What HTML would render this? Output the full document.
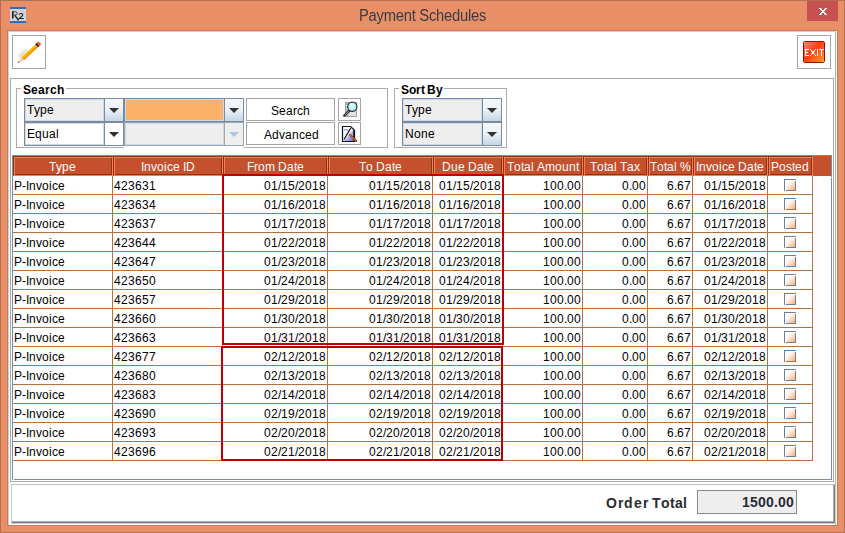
<!DOCTYPE html>
<html><head><meta charset="utf-8"><style>
*{margin:0;padding:0;box-sizing:border-box}
html,body{width:845px;height:533px;overflow:hidden}
body{position:relative;background:#E88F67;font-family:"Liberation Sans",sans-serif;font-size:12px;color:#000}
div,span,i,svg{position:absolute}
i{font-style:normal;top:0}
.tx{line-height:14px;white-space:nowrap;height:14px}
.hc{top:156px;height:20px;background:#C5502E;border-style:solid;border-width:1px;border-color:#8A3519 #FF7C4C #FF7C4C #8A3519;box-shadow:inset 1px 1px 0 #FF7C4C,inset -1px -1px 0 #8A3519}
.gv{width:1px;background:#B8703C}
.gh{height:1px;background:#B8703C}
.red{background:#C00000}
.cb{width:12px;height:12px;border:1px solid #7A8A99;background:linear-gradient(135deg,#fff 15%,#F9D2B8 55%,#F29A60 100%)}
.btn{border:1px solid #A5A5A5;background:#fff}
.combo{border:1px solid #7B8B9B;height:24px}
.combo .f{left:0;top:0;bottom:0;border:1px solid #CBD9E8}
.arr{border-left:1px solid #7B8B9B;top:0;bottom:0;width:19px}
.tri{width:0;height:0;border-left:5px solid transparent;border-right:5px solid transparent;border-top:5px solid #333}
</style></head><body>
<svg width="0" height="0" style="left:0;top:0"><defs><linearGradient id="cbg" x1="0" y1="0" x2="1" y2="1"><stop offset="0" stop-color="#fff"/><stop offset="0.35" stop-color="#FFF6F0"/><stop offset="1" stop-color="#FFAC6E"/></linearGradient></defs></svg>
<div style="left:0;top:0;width:845px;height:533px;border:1px solid #B7704F"></div>
<svg style="left:10px;top:7px" width="16" height="16" viewBox="0 0 16 16">
<rect width="16" height="16" fill="#D2D3D9"/>
<rect width="16" height="2" fill="#2B6FC4"/><rect y="14" width="16" height="2" fill="#2B6FC4"/>
<path d="M2.8 4.3v7.3" stroke="#151515" stroke-width="1.5"/>
<path d="M2.5 4.8h2.8c1.2 0 1.9 0.7 1.9 1.6c0 1-0.7 1.6-1.8 1.6h-1.8" fill="none" stroke="#2A2A2A" stroke-width="0.9"/>
<path d="M4.8 8.3l3.8 5" stroke="#151515" stroke-width="1.3"/>
<path d="M9.2 7.6c0.3-1.4 3.4-1.6 3.6 0c0.1 1.1-1.8 2.4-3.4 3.9h4.4" fill="none" stroke="#1E1E1E" stroke-width="1.15"/>
</svg>
<div style="left:0;top:7px;width:845px;text-align:center;font-size:16px;line-height:18px;color:#383D44;letter-spacing:-0.25px;transform:scaleX(0.92);transform-origin:423px 0">Payment Schedules</div>
<div style="left:807px;top:1px;width:31px;height:20px;background:#C75050"></div>
<svg style="left:819px;top:8px" width="8" height="7" fill="#fff" shape-rendering="crispEdges"><rect x="0" y="0" width="2" height="1"/><rect x="2" y="0" width="1" height="1" fill-opacity="0.45"/><rect x="5" y="0" width="1" height="1" fill-opacity="0.45"/><rect x="6" y="0" width="2" height="1"/><rect x="1" y="1" width="2" height="1"/><rect x="5" y="1" width="2" height="1"/><rect x="2" y="2" width="4" height="1"/><rect x="3" y="3" width="2" height="1"/><rect x="2" y="4" width="4" height="1"/><rect x="1" y="5" width="2" height="1"/><rect x="5" y="5" width="2" height="1"/><rect x="0" y="6" width="2" height="1"/><rect x="2" y="6" width="1" height="1" fill-opacity="0.45"/><rect x="5" y="6" width="1" height="1" fill-opacity="0.45"/><rect x="6" y="6" width="2" height="1"/></svg>
<div style="left:7px;top:30px;width:831px;height:496px;border:1px solid #C97A58;background:#fff"></div>
<div style="left:8px;top:31px;width:828px;height:494px;border-top:1px solid #C8D3DC;border-left:1px solid #C8D3DC;border-right:1px solid #B5B5B5"></div>
<div class="btn" style="left:12px;top:35px;width:34px;height:34px"></div>
<svg style="left:13px;top:36px" width="32" height="32" viewBox="0 0 32 32">
<defs><filter id="bl" x="-50%" y="-50%" width="200%" height="200%"><feGaussianBlur stdDeviation="1.1"/></filter>
<linearGradient id="pb" x1="0" y1="0" x2="0" y2="1"><stop offset="0" stop-color="#FFD24A"/><stop offset="0.45" stop-color="#FAAE00"/><stop offset="1" stop-color="#E48A00"/></linearGradient></defs>
<g transform="translate(4.8 27) rotate(-42.5)"><rect x="5" y="-5.2" width="11" height="3" fill="#000" opacity="0.14" filter="url(#bl)"/></g>
<g transform="translate(4.8 27) rotate(-42.5)">
<path d="M0 0L6.5 -2.1V2.1Z" fill="#F2D2B2"/>
<path d="M0 0L2 -0.65V0.65Z" fill="#222"/>
<rect x="6.5" y="-2.1" width="19" height="4.2" fill="url(#pb)"/>
<rect x="25.5" y="-2.1" width="2" height="4.2" fill="#222"/>
<rect x="27.3" y="-2.1" width="2.6" height="4.2" rx="0.8" fill="#FF5520"/>
</g></svg>
<div class="btn" style="left:797px;top:35px;width:34px;height:34px"></div>
<svg style="left:803px;top:41px" width="22" height="22" viewBox="0 0 22 22">
<defs><linearGradient id="eg" x1="0" y1="0" x2="1" y2="1"><stop offset="0" stop-color="#E99282"/><stop offset="0.45" stop-color="#FF3E0E"/><stop offset="1" stop-color="#FFA030"/></linearGradient></defs>
<path d="M1.5 0.5h19l1 1v19l-1 1h-19l-1-1v-19z" fill="url(#eg)" stroke="#9C0C0C" stroke-width="1"/>
<g fill="#fff" shape-rendering="crispEdges"><rect x="2" y="8" width="1" height="7"/><rect x="3" y="8" width="3" height="1"/><rect x="3" y="11" width="2" height="1"/><rect x="3" y="14" width="3" height="1"/><rect x="7" y="8" width="1" height="1"/><rect x="12" y="8" width="1" height="1"/><rect x="8" y="9" width="1" height="1"/><rect x="11" y="9" width="1" height="1"/><rect x="8" y="13" width="1" height="1"/><rect x="11" y="13" width="1" height="1"/><rect x="7" y="14" width="1" height="1"/><rect x="12" y="14" width="1" height="1"/><rect x="9" y="10" width="2" height="3"/><rect x="8" y="10" width="1" height="1" fill-opacity="0.5"/><rect x="11" y="10" width="1" height="1" fill-opacity="0.5"/><rect x="8" y="12" width="1" height="1" fill-opacity="0.5"/><rect x="11" y="12" width="1" height="1" fill-opacity="0.5"/><rect x="14" y="8" width="1" height="7"/><rect x="16" y="8" width="5" height="1"/><rect x="18" y="9" width="1" height="6"/></g>
</svg>
<div style="left:10px;top:78px;width:824px;height:404px;border:1px solid #ABABAB"></div>
<div style="left:16px;top:88px;width:372px;height:60px;border:1px solid #ABABAB"></div>
<div style="left:21px;top:82px;width:45px;height:12px;background:#fff"></div>
<div style="left:124px;top:146px;width:120px;height:3px;background:#fff"></div>
<div class="tx" style="left:23px;top:83px;font-weight:bold"><i style="left:0px">S</i><i style="left:8px">e</i><i style="left:15px">a</i><i style="left:22px">r</i><i style="left:27px">c</i><i style="left:34px">h</i></div>
<div style="left:394px;top:88px;width:113px;height:60px;border:1px solid #ABABAB"></div>
<div style="left:399px;top:82px;width:45px;height:12px;background:#fff"></div>
<div class="tx" style="left:401px;top:83px;font-weight:bold"><i style="left:0px">S</i><i style="left:8px">o</i><i style="left:15px">r</i><i style="left:20px">t</i></div>
<div class="tx" style="left:427px;top:83px;font-weight:bold"><i style="left:0px">B</i><i style="left:9px">y</i></div>
<div class="combo" style="left:24px;top:98px;width:100px;background:#EEEEEE;border-color:#7B8B9B"><div class="f" style="width:79px"></div><div class="tx" style="left:2px;top:4px"><i style="left:0px">T</i><i style="left:7px">y</i><i style="left:13px">p</i><i style="left:20px">e</i></div><div class="arr" style="right:0;background:linear-gradient(#F4F7FB,#EEF3F8 45%,#C5D6E7);border-left-color:#7B8B9B"><div class="tri" style="left:4px;top:9px;"></div></div></div>
<div class="combo" style="left:24px;top:122px;width:100px;background:#FFFFFF;border-color:#7B8B9B"><div class="f" style="width:79px"></div><div class="tx" style="left:2px;top:4px"><i style="left:0px">E</i><i style="left:8px">q</i><i style="left:15px">u</i><i style="left:22px">a</i><i style="left:29px">l</i></div><div class="arr" style="right:0;background:#FFFFFF;border-left-color:#7B8B9B"><div class="tri" style="left:4px;top:9px;"></div></div></div>
<div class="combo" style="left:124px;top:98px;width:120px;background:#FCB16B;border-color:#7B8B9B"><div class="f" style="width:99px"></div><div class="arr" style="right:0;background:linear-gradient(#F4F7FB,#EEF3F8 45%,#C5D6E7);border-left-color:#7B8B9B"><div class="tri" style="left:4px;top:9px;"></div></div></div>
<div class="combo" style="left:124px;top:122px;width:120px;background:#EEEEEE;border-color:#9AA6B2"><div class="f" style="width:99px"></div><div class="arr" style="right:0;background:#EEEEEE;border-left-color:#9AA6B2"><div class="tri" style="left:4px;top:9px;border-top-color:#A9C6E3"></div></div></div>
<div class="btn" style="left:246px;top:98px;width:89px;height:23px"></div>
<div class="tx" style="left:271px;top:104px"><i style="left:0px">S</i><i style="left:8px">e</i><i style="left:15px">a</i><i style="left:22px">r</i><i style="left:26px">c</i><i style="left:32px">h</i></div>
<div class="btn" style="left:246px;top:122px;width:89px;height:23px"></div>
<div class="tx" style="left:264px;top:128px"><i style="left:0px">A</i><i style="left:8px">d</i><i style="left:15px">v</i><i style="left:21px">a</i><i style="left:28px">n</i><i style="left:35px">c</i><i style="left:41px">e</i><i style="left:48px">d</i></div>
<div class="btn" style="left:338px;top:98px;width:23px;height:23px"></div>
<svg style="left:339px;top:99px" width="21" height="21" viewBox="0 0 21 21">
<defs><radialGradient id="lg" cx="0.45" cy="0.45" r="0.6"><stop offset="0" stop-color="#E6FFFF"/><stop offset="1" stop-color="#9FE6EE"/></radialGradient></defs>
<rect x="6.5" y="3.5" width="11" height="14" fill="#E2E2E2" stroke="#A0A0A0"/>
<rect x="7" y="4" width="2.5" height="13" fill="#B8B8B8"/>
<path d="M7 6.5h3M7 9.5h2.5" stroke="#fff" stroke-width="1"/>
<path d="M10.2 11.8L5.3 16.7" stroke="#3A3A3A" stroke-width="2.6" stroke-linecap="round"/>
<path d="M9.6 12.4L6 16" stroke="#9A9A9A" stroke-width="0.8"/>
<circle cx="13.3" cy="7.7" r="4.6" fill="url(#lg)" stroke="#333" stroke-width="1.2"/>
</svg>
<div class="btn" style="left:338px;top:122px;width:23px;height:23px"></div>
<svg style="left:339px;top:123px" width="21" height="21" viewBox="0 0 21 21">
<defs><linearGradient id="ag" x1="0" y1="0" x2="1" y2="1"><stop offset="0" stop-color="#FFFFFF"/><stop offset="0.5" stop-color="#F4F4FF"/><stop offset="0.6" stop-color="#B4B4F6"/><stop offset="1" stop-color="#5E5EEA"/></linearGradient></defs>
<path d="M3.5 3.5h8.2l3.8 3.8v11.2h-12z" fill="url(#ag)" stroke="#111" stroke-width="1.2"/>
<path d="M14.5 7.5v10" stroke="#333" stroke-width="1"/>
<path d="M5 7c2 -0.8 3.5 -0.3 4.5 0.8" stroke="#A0A0F2" stroke-width="1.4" fill="none"/>
<path d="M5 16.5L11.8 5" stroke="#111" stroke-width="1.2"/>
<path d="M11 12L17.4 18" stroke="#8A3A10" stroke-width="2" stroke-linecap="round"/>
<path d="M11 12L17.4 18" stroke="#F0904A" stroke-width="0.8"/>
</svg>
<div class="combo" style="left:402px;top:98px;width:100px;background:#EEEEEE;border-color:#7B8B9B"><div class="f" style="width:79px"></div><div class="tx" style="left:2px;top:4px"><i style="left:0px">T</i><i style="left:7px">y</i><i style="left:13px">p</i><i style="left:20px">e</i></div><div class="arr" style="right:0;background:linear-gradient(#F4F7FB,#EEF3F8 45%,#C5D6E7);border-left-color:#7B8B9B"><div class="tri" style="left:4px;top:9px;"></div></div></div>
<div class="combo" style="left:402px;top:122px;width:100px;background:#EEEEEE;border-color:#7B8B9B"><div class="f" style="width:79px"></div><div class="tx" style="left:2px;top:4px"><i style="left:0px">N</i><i style="left:9px">o</i><i style="left:16px">n</i><i style="left:23px">e</i></div><div class="arr" style="right:0;background:linear-gradient(#F4F7FB,#EEF3F8 45%,#C5D6E7);border-left-color:#7B8B9B"><div class="tri" style="left:4px;top:9px;"></div></div></div>
<div style="left:12px;top:155px;width:820px;height:325px;border:1px solid #7790A5;background:#fff"></div>
<div style="left:13px;top:156px;width:818px;height:20px;background:#C5502E"></div>
<div style="left:831px;top:177px;width:1px;height:1px;background:#fff"></div>
<div style="left:13px;top:479px;width:1px;height:1px;background:#fff"></div>
<div class="hc" style="left:13px;width:100px"></div>
<div class="tx" style="left:49px;top:160px;color:#fff"><i style="left:0px">T</i><i style="left:7px">y</i><i style="left:13px">p</i><i style="left:20px">e</i></div>
<div class="hc" style="left:113px;width:110px"></div>
<div class="tx" style="left:141px;top:160px;color:#fff"><i style="left:0px">I</i><i style="left:3px">n</i><i style="left:10px">v</i><i style="left:16px">o</i><i style="left:23px">i</i><i style="left:26px">c</i><i style="left:32px">e</i><i style="left:42px">I</i><i style="left:45px">D</i></div>
<div class="hc" style="left:223px;width:105px"></div>
<div class="tx" style="left:247px;top:160px;color:#fff"><i style="left:0px">F</i><i style="left:7px">r</i><i style="left:11px">o</i><i style="left:18px">m</i><i style="left:31px">D</i><i style="left:40px">a</i><i style="left:47px">t</i><i style="left:50px">e</i></div>
<div class="hc" style="left:328px;width:105px"></div>
<div class="tx" style="left:359px;top:160px;color:#fff"><i style="left:0px">T</i><i style="left:7px">o</i><i style="left:17px">D</i><i style="left:26px">a</i><i style="left:33px">t</i><i style="left:36px">e</i></div>
<div class="hc" style="left:433px;width:70px"></div>
<div class="tx" style="left:442px;top:160px;color:#fff"><i style="left:0px">D</i><i style="left:9px">u</i><i style="left:16px">e</i><i style="left:26px">D</i><i style="left:35px">a</i><i style="left:42px">t</i><i style="left:45px">e</i></div>
<div class="hc" style="left:503px;width:80px"></div>
<div class="tx" style="left:507px;top:160px;color:#fff"><i style="left:0px">T</i><i style="left:7px">o</i><i style="left:14px">t</i><i style="left:17px">a</i><i style="left:24px">l</i><i style="left:30px">A</i><i style="left:38px">m</i><i style="left:48px">o</i><i style="left:55px">u</i><i style="left:62px">n</i><i style="left:69px">t</i></div>
<div class="hc" style="left:583px;width:65px"></div>
<div class="tx" style="left:590px;top:160px;color:#fff"><i style="left:0px">T</i><i style="left:7px">o</i><i style="left:14px">t</i><i style="left:17px">a</i><i style="left:24px">l</i><i style="left:30px">T</i><i style="left:37px">a</i><i style="left:44px">x</i></div>
<div class="hc" style="left:648px;width:45px"></div>
<div class="tx" style="left:650px;top:160px;color:#fff"><i style="left:0px">T</i><i style="left:7px">o</i><i style="left:14px">t</i><i style="left:17px">a</i><i style="left:24px">l</i><i style="left:30px">%</i></div>
<div class="hc" style="left:693px;width:75px"></div>
<div class="tx" style="left:696px;top:160px;color:#fff"><i style="left:0px">I</i><i style="left:3px">n</i><i style="left:10px">v</i><i style="left:16px">o</i><i style="left:23px">i</i><i style="left:26px">c</i><i style="left:32px">e</i><i style="left:42px">D</i><i style="left:51px">a</i><i style="left:58px">t</i><i style="left:61px">e</i></div>
<div class="hc" style="left:768px;width:45px"></div>
<div class="tx" style="left:771px;top:160px;color:#fff"><i style="left:0px">P</i><i style="left:8px">o</i><i style="left:15px">s</i><i style="left:21px">t</i><i style="left:24px">e</i><i style="left:31px">d</i></div>
<div class="gv" style="left:112px;top:176px;height:285px"></div>
<div class="gv" style="left:222px;top:176px;height:285px"></div>
<div class="gv" style="left:327px;top:176px;height:285px"></div>
<div class="gv" style="left:432px;top:176px;height:285px"></div>
<div class="gv" style="left:502px;top:176px;height:285px"></div>
<div class="gv" style="left:582px;top:176px;height:285px"></div>
<div class="gv" style="left:647px;top:176px;height:285px"></div>
<div class="gv" style="left:692px;top:176px;height:285px"></div>
<div class="gv" style="left:767px;top:176px;height:285px"></div>
<div class="gv" style="left:812px;top:176px;height:285px"></div>
<div class="gh" style="left:13px;top:194px;width:800px"></div>
<div class="gh" style="left:13px;top:213px;width:800px"></div>
<div class="gh" style="left:13px;top:232px;width:800px"></div>
<div class="gh" style="left:13px;top:251px;width:800px"></div>
<div class="gh" style="left:13px;top:270px;width:800px"></div>
<div class="gh" style="left:13px;top:289px;width:800px"></div>
<div class="gh" style="left:13px;top:308px;width:800px"></div>
<div class="gh" style="left:13px;top:327px;width:800px"></div>
<div class="gh" style="left:13px;top:346px;width:800px"></div>
<div class="gh" style="left:13px;top:365px;width:800px"></div>
<div class="gh" style="left:13px;top:384px;width:800px"></div>
<div class="gh" style="left:13px;top:403px;width:800px"></div>
<div class="gh" style="left:13px;top:422px;width:800px"></div>
<div class="gh" style="left:13px;top:441px;width:800px"></div>
<div class="gh" style="left:13px;top:460px;width:800px"></div>
<div class="tx" style="left:14px;top:179px"><i style="left:0px">P</i><i style="left:8px">-</i><i style="left:12px">I</i><i style="left:15px">n</i><i style="left:22px">v</i><i style="left:28px">o</i><i style="left:35px">i</i><i style="left:38px">c</i><i style="left:44px">e</i></div>
<div class="tx" style="left:114px;top:179px"><i style="left:0px">4</i><i style="left:7px">2</i><i style="left:14px">3</i><i style="left:21px">6</i><i style="left:28px">3</i><i style="left:35px">1</i></div>
<div class="tx" style="left:264px;top:179px"><i style="left:0px">0</i><i style="left:7px">1</i><i style="left:14px">/</i><i style="left:17px">1</i><i style="left:24px">5</i><i style="left:31px">/</i><i style="left:34px">2</i><i style="left:41px">0</i><i style="left:48px">1</i><i style="left:55px">8</i></div>
<div class="tx" style="left:369px;top:179px"><i style="left:0px">0</i><i style="left:7px">1</i><i style="left:14px">/</i><i style="left:17px">1</i><i style="left:24px">5</i><i style="left:31px">/</i><i style="left:34px">2</i><i style="left:41px">0</i><i style="left:48px">1</i><i style="left:55px">8</i></div>
<div class="tx" style="left:439px;top:179px"><i style="left:0px">0</i><i style="left:7px">1</i><i style="left:14px">/</i><i style="left:17px">1</i><i style="left:24px">5</i><i style="left:31px">/</i><i style="left:34px">2</i><i style="left:41px">0</i><i style="left:48px">1</i><i style="left:55px">8</i></div>
<div class="tx" style="left:543px;top:179px"><i style="left:0px">1</i><i style="left:7px">0</i><i style="left:14px">0</i><i style="left:21px">.</i><i style="left:24px">0</i><i style="left:31px">0</i></div>
<div class="tx" style="left:622px;top:179px"><i style="left:0px">0</i><i style="left:7px">.</i><i style="left:10px">0</i><i style="left:17px">0</i></div>
<div class="tx" style="left:667px;top:179px"><i style="left:0px">6</i><i style="left:7px">.</i><i style="left:10px">6</i><i style="left:17px">7</i></div>
<div class="tx" style="left:704px;top:179px"><i style="left:0px">0</i><i style="left:7px">1</i><i style="left:14px">/</i><i style="left:17px">1</i><i style="left:24px">5</i><i style="left:31px">/</i><i style="left:34px">2</i><i style="left:41px">0</i><i style="left:48px">1</i><i style="left:55px">8</i></div>
<svg style="left:784px;top:179px" width="12" height="12" viewBox="0 0 12 12"><rect width="12" height="1" fill="#6E8092"/><rect width="1" height="12" fill="#6E8092"/><rect x="11" y="2" width="1" height="10" fill="#6E8092"/><rect x="2" y="11" width="10" height="1" fill="#6E8092"/><rect x="2" y="2" width="9" height="9" fill="url(#cbg)"/></svg>
<div class="tx" style="left:14px;top:198px"><i style="left:0px">P</i><i style="left:8px">-</i><i style="left:12px">I</i><i style="left:15px">n</i><i style="left:22px">v</i><i style="left:28px">o</i><i style="left:35px">i</i><i style="left:38px">c</i><i style="left:44px">e</i></div>
<div class="tx" style="left:114px;top:198px"><i style="left:0px">4</i><i style="left:7px">2</i><i style="left:14px">3</i><i style="left:21px">6</i><i style="left:28px">3</i><i style="left:35px">4</i></div>
<div class="tx" style="left:264px;top:198px"><i style="left:0px">0</i><i style="left:7px">1</i><i style="left:14px">/</i><i style="left:17px">1</i><i style="left:24px">6</i><i style="left:31px">/</i><i style="left:34px">2</i><i style="left:41px">0</i><i style="left:48px">1</i><i style="left:55px">8</i></div>
<div class="tx" style="left:369px;top:198px"><i style="left:0px">0</i><i style="left:7px">1</i><i style="left:14px">/</i><i style="left:17px">1</i><i style="left:24px">6</i><i style="left:31px">/</i><i style="left:34px">2</i><i style="left:41px">0</i><i style="left:48px">1</i><i style="left:55px">8</i></div>
<div class="tx" style="left:439px;top:198px"><i style="left:0px">0</i><i style="left:7px">1</i><i style="left:14px">/</i><i style="left:17px">1</i><i style="left:24px">6</i><i style="left:31px">/</i><i style="left:34px">2</i><i style="left:41px">0</i><i style="left:48px">1</i><i style="left:55px">8</i></div>
<div class="tx" style="left:543px;top:198px"><i style="left:0px">1</i><i style="left:7px">0</i><i style="left:14px">0</i><i style="left:21px">.</i><i style="left:24px">0</i><i style="left:31px">0</i></div>
<div class="tx" style="left:622px;top:198px"><i style="left:0px">0</i><i style="left:7px">.</i><i style="left:10px">0</i><i style="left:17px">0</i></div>
<div class="tx" style="left:667px;top:198px"><i style="left:0px">6</i><i style="left:7px">.</i><i style="left:10px">6</i><i style="left:17px">7</i></div>
<div class="tx" style="left:704px;top:198px"><i style="left:0px">0</i><i style="left:7px">1</i><i style="left:14px">/</i><i style="left:17px">1</i><i style="left:24px">6</i><i style="left:31px">/</i><i style="left:34px">2</i><i style="left:41px">0</i><i style="left:48px">1</i><i style="left:55px">8</i></div>
<svg style="left:784px;top:198px" width="12" height="12" viewBox="0 0 12 12"><rect width="12" height="1" fill="#6E8092"/><rect width="1" height="12" fill="#6E8092"/><rect x="11" y="2" width="1" height="10" fill="#6E8092"/><rect x="2" y="11" width="10" height="1" fill="#6E8092"/><rect x="2" y="2" width="9" height="9" fill="url(#cbg)"/></svg>
<div class="tx" style="left:14px;top:217px"><i style="left:0px">P</i><i style="left:8px">-</i><i style="left:12px">I</i><i style="left:15px">n</i><i style="left:22px">v</i><i style="left:28px">o</i><i style="left:35px">i</i><i style="left:38px">c</i><i style="left:44px">e</i></div>
<div class="tx" style="left:114px;top:217px"><i style="left:0px">4</i><i style="left:7px">2</i><i style="left:14px">3</i><i style="left:21px">6</i><i style="left:28px">3</i><i style="left:35px">7</i></div>
<div class="tx" style="left:264px;top:217px"><i style="left:0px">0</i><i style="left:7px">1</i><i style="left:14px">/</i><i style="left:17px">1</i><i style="left:24px">7</i><i style="left:31px">/</i><i style="left:34px">2</i><i style="left:41px">0</i><i style="left:48px">1</i><i style="left:55px">8</i></div>
<div class="tx" style="left:369px;top:217px"><i style="left:0px">0</i><i style="left:7px">1</i><i style="left:14px">/</i><i style="left:17px">1</i><i style="left:24px">7</i><i style="left:31px">/</i><i style="left:34px">2</i><i style="left:41px">0</i><i style="left:48px">1</i><i style="left:55px">8</i></div>
<div class="tx" style="left:439px;top:217px"><i style="left:0px">0</i><i style="left:7px">1</i><i style="left:14px">/</i><i style="left:17px">1</i><i style="left:24px">7</i><i style="left:31px">/</i><i style="left:34px">2</i><i style="left:41px">0</i><i style="left:48px">1</i><i style="left:55px">8</i></div>
<div class="tx" style="left:543px;top:217px"><i style="left:0px">1</i><i style="left:7px">0</i><i style="left:14px">0</i><i style="left:21px">.</i><i style="left:24px">0</i><i style="left:31px">0</i></div>
<div class="tx" style="left:622px;top:217px"><i style="left:0px">0</i><i style="left:7px">.</i><i style="left:10px">0</i><i style="left:17px">0</i></div>
<div class="tx" style="left:667px;top:217px"><i style="left:0px">6</i><i style="left:7px">.</i><i style="left:10px">6</i><i style="left:17px">7</i></div>
<div class="tx" style="left:704px;top:217px"><i style="left:0px">0</i><i style="left:7px">1</i><i style="left:14px">/</i><i style="left:17px">1</i><i style="left:24px">7</i><i style="left:31px">/</i><i style="left:34px">2</i><i style="left:41px">0</i><i style="left:48px">1</i><i style="left:55px">8</i></div>
<svg style="left:784px;top:217px" width="12" height="12" viewBox="0 0 12 12"><rect width="12" height="1" fill="#6E8092"/><rect width="1" height="12" fill="#6E8092"/><rect x="11" y="2" width="1" height="10" fill="#6E8092"/><rect x="2" y="11" width="10" height="1" fill="#6E8092"/><rect x="2" y="2" width="9" height="9" fill="url(#cbg)"/></svg>
<div class="tx" style="left:14px;top:236px"><i style="left:0px">P</i><i style="left:8px">-</i><i style="left:12px">I</i><i style="left:15px">n</i><i style="left:22px">v</i><i style="left:28px">o</i><i style="left:35px">i</i><i style="left:38px">c</i><i style="left:44px">e</i></div>
<div class="tx" style="left:114px;top:236px"><i style="left:0px">4</i><i style="left:7px">2</i><i style="left:14px">3</i><i style="left:21px">6</i><i style="left:28px">4</i><i style="left:35px">4</i></div>
<div class="tx" style="left:264px;top:236px"><i style="left:0px">0</i><i style="left:7px">1</i><i style="left:14px">/</i><i style="left:17px">2</i><i style="left:24px">2</i><i style="left:31px">/</i><i style="left:34px">2</i><i style="left:41px">0</i><i style="left:48px">1</i><i style="left:55px">8</i></div>
<div class="tx" style="left:369px;top:236px"><i style="left:0px">0</i><i style="left:7px">1</i><i style="left:14px">/</i><i style="left:17px">2</i><i style="left:24px">2</i><i style="left:31px">/</i><i style="left:34px">2</i><i style="left:41px">0</i><i style="left:48px">1</i><i style="left:55px">8</i></div>
<div class="tx" style="left:439px;top:236px"><i style="left:0px">0</i><i style="left:7px">1</i><i style="left:14px">/</i><i style="left:17px">2</i><i style="left:24px">2</i><i style="left:31px">/</i><i style="left:34px">2</i><i style="left:41px">0</i><i style="left:48px">1</i><i style="left:55px">8</i></div>
<div class="tx" style="left:543px;top:236px"><i style="left:0px">1</i><i style="left:7px">0</i><i style="left:14px">0</i><i style="left:21px">.</i><i style="left:24px">0</i><i style="left:31px">0</i></div>
<div class="tx" style="left:622px;top:236px"><i style="left:0px">0</i><i style="left:7px">.</i><i style="left:10px">0</i><i style="left:17px">0</i></div>
<div class="tx" style="left:667px;top:236px"><i style="left:0px">6</i><i style="left:7px">.</i><i style="left:10px">6</i><i style="left:17px">7</i></div>
<div class="tx" style="left:704px;top:236px"><i style="left:0px">0</i><i style="left:7px">1</i><i style="left:14px">/</i><i style="left:17px">2</i><i style="left:24px">2</i><i style="left:31px">/</i><i style="left:34px">2</i><i style="left:41px">0</i><i style="left:48px">1</i><i style="left:55px">8</i></div>
<svg style="left:784px;top:236px" width="12" height="12" viewBox="0 0 12 12"><rect width="12" height="1" fill="#6E8092"/><rect width="1" height="12" fill="#6E8092"/><rect x="11" y="2" width="1" height="10" fill="#6E8092"/><rect x="2" y="11" width="10" height="1" fill="#6E8092"/><rect x="2" y="2" width="9" height="9" fill="url(#cbg)"/></svg>
<div class="tx" style="left:14px;top:255px"><i style="left:0px">P</i><i style="left:8px">-</i><i style="left:12px">I</i><i style="left:15px">n</i><i style="left:22px">v</i><i style="left:28px">o</i><i style="left:35px">i</i><i style="left:38px">c</i><i style="left:44px">e</i></div>
<div class="tx" style="left:114px;top:255px"><i style="left:0px">4</i><i style="left:7px">2</i><i style="left:14px">3</i><i style="left:21px">6</i><i style="left:28px">4</i><i style="left:35px">7</i></div>
<div class="tx" style="left:264px;top:255px"><i style="left:0px">0</i><i style="left:7px">1</i><i style="left:14px">/</i><i style="left:17px">2</i><i style="left:24px">3</i><i style="left:31px">/</i><i style="left:34px">2</i><i style="left:41px">0</i><i style="left:48px">1</i><i style="left:55px">8</i></div>
<div class="tx" style="left:369px;top:255px"><i style="left:0px">0</i><i style="left:7px">1</i><i style="left:14px">/</i><i style="left:17px">2</i><i style="left:24px">3</i><i style="left:31px">/</i><i style="left:34px">2</i><i style="left:41px">0</i><i style="left:48px">1</i><i style="left:55px">8</i></div>
<div class="tx" style="left:439px;top:255px"><i style="left:0px">0</i><i style="left:7px">1</i><i style="left:14px">/</i><i style="left:17px">2</i><i style="left:24px">3</i><i style="left:31px">/</i><i style="left:34px">2</i><i style="left:41px">0</i><i style="left:48px">1</i><i style="left:55px">8</i></div>
<div class="tx" style="left:543px;top:255px"><i style="left:0px">1</i><i style="left:7px">0</i><i style="left:14px">0</i><i style="left:21px">.</i><i style="left:24px">0</i><i style="left:31px">0</i></div>
<div class="tx" style="left:622px;top:255px"><i style="left:0px">0</i><i style="left:7px">.</i><i style="left:10px">0</i><i style="left:17px">0</i></div>
<div class="tx" style="left:667px;top:255px"><i style="left:0px">6</i><i style="left:7px">.</i><i style="left:10px">6</i><i style="left:17px">7</i></div>
<div class="tx" style="left:704px;top:255px"><i style="left:0px">0</i><i style="left:7px">1</i><i style="left:14px">/</i><i style="left:17px">2</i><i style="left:24px">3</i><i style="left:31px">/</i><i style="left:34px">2</i><i style="left:41px">0</i><i style="left:48px">1</i><i style="left:55px">8</i></div>
<svg style="left:784px;top:255px" width="12" height="12" viewBox="0 0 12 12"><rect width="12" height="1" fill="#6E8092"/><rect width="1" height="12" fill="#6E8092"/><rect x="11" y="2" width="1" height="10" fill="#6E8092"/><rect x="2" y="11" width="10" height="1" fill="#6E8092"/><rect x="2" y="2" width="9" height="9" fill="url(#cbg)"/></svg>
<div class="tx" style="left:14px;top:274px"><i style="left:0px">P</i><i style="left:8px">-</i><i style="left:12px">I</i><i style="left:15px">n</i><i style="left:22px">v</i><i style="left:28px">o</i><i style="left:35px">i</i><i style="left:38px">c</i><i style="left:44px">e</i></div>
<div class="tx" style="left:114px;top:274px"><i style="left:0px">4</i><i style="left:7px">2</i><i style="left:14px">3</i><i style="left:21px">6</i><i style="left:28px">5</i><i style="left:35px">0</i></div>
<div class="tx" style="left:264px;top:274px"><i style="left:0px">0</i><i style="left:7px">1</i><i style="left:14px">/</i><i style="left:17px">2</i><i style="left:24px">4</i><i style="left:31px">/</i><i style="left:34px">2</i><i style="left:41px">0</i><i style="left:48px">1</i><i style="left:55px">8</i></div>
<div class="tx" style="left:369px;top:274px"><i style="left:0px">0</i><i style="left:7px">1</i><i style="left:14px">/</i><i style="left:17px">2</i><i style="left:24px">4</i><i style="left:31px">/</i><i style="left:34px">2</i><i style="left:41px">0</i><i style="left:48px">1</i><i style="left:55px">8</i></div>
<div class="tx" style="left:439px;top:274px"><i style="left:0px">0</i><i style="left:7px">1</i><i style="left:14px">/</i><i style="left:17px">2</i><i style="left:24px">4</i><i style="left:31px">/</i><i style="left:34px">2</i><i style="left:41px">0</i><i style="left:48px">1</i><i style="left:55px">8</i></div>
<div class="tx" style="left:543px;top:274px"><i style="left:0px">1</i><i style="left:7px">0</i><i style="left:14px">0</i><i style="left:21px">.</i><i style="left:24px">0</i><i style="left:31px">0</i></div>
<div class="tx" style="left:622px;top:274px"><i style="left:0px">0</i><i style="left:7px">.</i><i style="left:10px">0</i><i style="left:17px">0</i></div>
<div class="tx" style="left:667px;top:274px"><i style="left:0px">6</i><i style="left:7px">.</i><i style="left:10px">6</i><i style="left:17px">7</i></div>
<div class="tx" style="left:704px;top:274px"><i style="left:0px">0</i><i style="left:7px">1</i><i style="left:14px">/</i><i style="left:17px">2</i><i style="left:24px">4</i><i style="left:31px">/</i><i style="left:34px">2</i><i style="left:41px">0</i><i style="left:48px">1</i><i style="left:55px">8</i></div>
<svg style="left:784px;top:274px" width="12" height="12" viewBox="0 0 12 12"><rect width="12" height="1" fill="#6E8092"/><rect width="1" height="12" fill="#6E8092"/><rect x="11" y="2" width="1" height="10" fill="#6E8092"/><rect x="2" y="11" width="10" height="1" fill="#6E8092"/><rect x="2" y="2" width="9" height="9" fill="url(#cbg)"/></svg>
<div class="tx" style="left:14px;top:293px"><i style="left:0px">P</i><i style="left:8px">-</i><i style="left:12px">I</i><i style="left:15px">n</i><i style="left:22px">v</i><i style="left:28px">o</i><i style="left:35px">i</i><i style="left:38px">c</i><i style="left:44px">e</i></div>
<div class="tx" style="left:114px;top:293px"><i style="left:0px">4</i><i style="left:7px">2</i><i style="left:14px">3</i><i style="left:21px">6</i><i style="left:28px">5</i><i style="left:35px">7</i></div>
<div class="tx" style="left:264px;top:293px"><i style="left:0px">0</i><i style="left:7px">1</i><i style="left:14px">/</i><i style="left:17px">2</i><i style="left:24px">9</i><i style="left:31px">/</i><i style="left:34px">2</i><i style="left:41px">0</i><i style="left:48px">1</i><i style="left:55px">8</i></div>
<div class="tx" style="left:369px;top:293px"><i style="left:0px">0</i><i style="left:7px">1</i><i style="left:14px">/</i><i style="left:17px">2</i><i style="left:24px">9</i><i style="left:31px">/</i><i style="left:34px">2</i><i style="left:41px">0</i><i style="left:48px">1</i><i style="left:55px">8</i></div>
<div class="tx" style="left:439px;top:293px"><i style="left:0px">0</i><i style="left:7px">1</i><i style="left:14px">/</i><i style="left:17px">2</i><i style="left:24px">9</i><i style="left:31px">/</i><i style="left:34px">2</i><i style="left:41px">0</i><i style="left:48px">1</i><i style="left:55px">8</i></div>
<div class="tx" style="left:543px;top:293px"><i style="left:0px">1</i><i style="left:7px">0</i><i style="left:14px">0</i><i style="left:21px">.</i><i style="left:24px">0</i><i style="left:31px">0</i></div>
<div class="tx" style="left:622px;top:293px"><i style="left:0px">0</i><i style="left:7px">.</i><i style="left:10px">0</i><i style="left:17px">0</i></div>
<div class="tx" style="left:667px;top:293px"><i style="left:0px">6</i><i style="left:7px">.</i><i style="left:10px">6</i><i style="left:17px">7</i></div>
<div class="tx" style="left:704px;top:293px"><i style="left:0px">0</i><i style="left:7px">1</i><i style="left:14px">/</i><i style="left:17px">2</i><i style="left:24px">9</i><i style="left:31px">/</i><i style="left:34px">2</i><i style="left:41px">0</i><i style="left:48px">1</i><i style="left:55px">8</i></div>
<svg style="left:784px;top:293px" width="12" height="12" viewBox="0 0 12 12"><rect width="12" height="1" fill="#6E8092"/><rect width="1" height="12" fill="#6E8092"/><rect x="11" y="2" width="1" height="10" fill="#6E8092"/><rect x="2" y="11" width="10" height="1" fill="#6E8092"/><rect x="2" y="2" width="9" height="9" fill="url(#cbg)"/></svg>
<div class="tx" style="left:14px;top:312px"><i style="left:0px">P</i><i style="left:8px">-</i><i style="left:12px">I</i><i style="left:15px">n</i><i style="left:22px">v</i><i style="left:28px">o</i><i style="left:35px">i</i><i style="left:38px">c</i><i style="left:44px">e</i></div>
<div class="tx" style="left:114px;top:312px"><i style="left:0px">4</i><i style="left:7px">2</i><i style="left:14px">3</i><i style="left:21px">6</i><i style="left:28px">6</i><i style="left:35px">0</i></div>
<div class="tx" style="left:264px;top:312px"><i style="left:0px">0</i><i style="left:7px">1</i><i style="left:14px">/</i><i style="left:17px">3</i><i style="left:24px">0</i><i style="left:31px">/</i><i style="left:34px">2</i><i style="left:41px">0</i><i style="left:48px">1</i><i style="left:55px">8</i></div>
<div class="tx" style="left:369px;top:312px"><i style="left:0px">0</i><i style="left:7px">1</i><i style="left:14px">/</i><i style="left:17px">3</i><i style="left:24px">0</i><i style="left:31px">/</i><i style="left:34px">2</i><i style="left:41px">0</i><i style="left:48px">1</i><i style="left:55px">8</i></div>
<div class="tx" style="left:439px;top:312px"><i style="left:0px">0</i><i style="left:7px">1</i><i style="left:14px">/</i><i style="left:17px">3</i><i style="left:24px">0</i><i style="left:31px">/</i><i style="left:34px">2</i><i style="left:41px">0</i><i style="left:48px">1</i><i style="left:55px">8</i></div>
<div class="tx" style="left:543px;top:312px"><i style="left:0px">1</i><i style="left:7px">0</i><i style="left:14px">0</i><i style="left:21px">.</i><i style="left:24px">0</i><i style="left:31px">0</i></div>
<div class="tx" style="left:622px;top:312px"><i style="left:0px">0</i><i style="left:7px">.</i><i style="left:10px">0</i><i style="left:17px">0</i></div>
<div class="tx" style="left:667px;top:312px"><i style="left:0px">6</i><i style="left:7px">.</i><i style="left:10px">6</i><i style="left:17px">7</i></div>
<div class="tx" style="left:704px;top:312px"><i style="left:0px">0</i><i style="left:7px">1</i><i style="left:14px">/</i><i style="left:17px">3</i><i style="left:24px">0</i><i style="left:31px">/</i><i style="left:34px">2</i><i style="left:41px">0</i><i style="left:48px">1</i><i style="left:55px">8</i></div>
<svg style="left:784px;top:312px" width="12" height="12" viewBox="0 0 12 12"><rect width="12" height="1" fill="#6E8092"/><rect width="1" height="12" fill="#6E8092"/><rect x="11" y="2" width="1" height="10" fill="#6E8092"/><rect x="2" y="11" width="10" height="1" fill="#6E8092"/><rect x="2" y="2" width="9" height="9" fill="url(#cbg)"/></svg>
<div class="tx" style="left:14px;top:331px"><i style="left:0px">P</i><i style="left:8px">-</i><i style="left:12px">I</i><i style="left:15px">n</i><i style="left:22px">v</i><i style="left:28px">o</i><i style="left:35px">i</i><i style="left:38px">c</i><i style="left:44px">e</i></div>
<div class="tx" style="left:114px;top:331px"><i style="left:0px">4</i><i style="left:7px">2</i><i style="left:14px">3</i><i style="left:21px">6</i><i style="left:28px">6</i><i style="left:35px">3</i></div>
<div class="tx" style="left:264px;top:331px"><i style="left:0px">0</i><i style="left:7px">1</i><i style="left:14px">/</i><i style="left:17px">3</i><i style="left:24px">1</i><i style="left:31px">/</i><i style="left:34px">2</i><i style="left:41px">0</i><i style="left:48px">1</i><i style="left:55px">8</i></div>
<div class="tx" style="left:369px;top:331px"><i style="left:0px">0</i><i style="left:7px">1</i><i style="left:14px">/</i><i style="left:17px">3</i><i style="left:24px">1</i><i style="left:31px">/</i><i style="left:34px">2</i><i style="left:41px">0</i><i style="left:48px">1</i><i style="left:55px">8</i></div>
<div class="tx" style="left:439px;top:331px"><i style="left:0px">0</i><i style="left:7px">1</i><i style="left:14px">/</i><i style="left:17px">3</i><i style="left:24px">1</i><i style="left:31px">/</i><i style="left:34px">2</i><i style="left:41px">0</i><i style="left:48px">1</i><i style="left:55px">8</i></div>
<div class="tx" style="left:543px;top:331px"><i style="left:0px">1</i><i style="left:7px">0</i><i style="left:14px">0</i><i style="left:21px">.</i><i style="left:24px">0</i><i style="left:31px">0</i></div>
<div class="tx" style="left:622px;top:331px"><i style="left:0px">0</i><i style="left:7px">.</i><i style="left:10px">0</i><i style="left:17px">0</i></div>
<div class="tx" style="left:667px;top:331px"><i style="left:0px">6</i><i style="left:7px">.</i><i style="left:10px">6</i><i style="left:17px">7</i></div>
<div class="tx" style="left:704px;top:331px"><i style="left:0px">0</i><i style="left:7px">1</i><i style="left:14px">/</i><i style="left:17px">3</i><i style="left:24px">1</i><i style="left:31px">/</i><i style="left:34px">2</i><i style="left:41px">0</i><i style="left:48px">1</i><i style="left:55px">8</i></div>
<svg style="left:784px;top:331px" width="12" height="12" viewBox="0 0 12 12"><rect width="12" height="1" fill="#6E8092"/><rect width="1" height="12" fill="#6E8092"/><rect x="11" y="2" width="1" height="10" fill="#6E8092"/><rect x="2" y="11" width="10" height="1" fill="#6E8092"/><rect x="2" y="2" width="9" height="9" fill="url(#cbg)"/></svg>
<div class="tx" style="left:14px;top:350px"><i style="left:0px">P</i><i style="left:8px">-</i><i style="left:12px">I</i><i style="left:15px">n</i><i style="left:22px">v</i><i style="left:28px">o</i><i style="left:35px">i</i><i style="left:38px">c</i><i style="left:44px">e</i></div>
<div class="tx" style="left:114px;top:350px"><i style="left:0px">4</i><i style="left:7px">2</i><i style="left:14px">3</i><i style="left:21px">6</i><i style="left:28px">7</i><i style="left:35px">7</i></div>
<div class="tx" style="left:264px;top:350px"><i style="left:0px">0</i><i style="left:7px">2</i><i style="left:14px">/</i><i style="left:17px">1</i><i style="left:24px">2</i><i style="left:31px">/</i><i style="left:34px">2</i><i style="left:41px">0</i><i style="left:48px">1</i><i style="left:55px">8</i></div>
<div class="tx" style="left:369px;top:350px"><i style="left:0px">0</i><i style="left:7px">2</i><i style="left:14px">/</i><i style="left:17px">1</i><i style="left:24px">2</i><i style="left:31px">/</i><i style="left:34px">2</i><i style="left:41px">0</i><i style="left:48px">1</i><i style="left:55px">8</i></div>
<div class="tx" style="left:439px;top:350px"><i style="left:0px">0</i><i style="left:7px">2</i><i style="left:14px">/</i><i style="left:17px">1</i><i style="left:24px">2</i><i style="left:31px">/</i><i style="left:34px">2</i><i style="left:41px">0</i><i style="left:48px">1</i><i style="left:55px">8</i></div>
<div class="tx" style="left:543px;top:350px"><i style="left:0px">1</i><i style="left:7px">0</i><i style="left:14px">0</i><i style="left:21px">.</i><i style="left:24px">0</i><i style="left:31px">0</i></div>
<div class="tx" style="left:622px;top:350px"><i style="left:0px">0</i><i style="left:7px">.</i><i style="left:10px">0</i><i style="left:17px">0</i></div>
<div class="tx" style="left:667px;top:350px"><i style="left:0px">6</i><i style="left:7px">.</i><i style="left:10px">6</i><i style="left:17px">7</i></div>
<div class="tx" style="left:704px;top:350px"><i style="left:0px">0</i><i style="left:7px">2</i><i style="left:14px">/</i><i style="left:17px">1</i><i style="left:24px">2</i><i style="left:31px">/</i><i style="left:34px">2</i><i style="left:41px">0</i><i style="left:48px">1</i><i style="left:55px">8</i></div>
<svg style="left:784px;top:350px" width="12" height="12" viewBox="0 0 12 12"><rect width="12" height="1" fill="#6E8092"/><rect width="1" height="12" fill="#6E8092"/><rect x="11" y="2" width="1" height="10" fill="#6E8092"/><rect x="2" y="11" width="10" height="1" fill="#6E8092"/><rect x="2" y="2" width="9" height="9" fill="url(#cbg)"/></svg>
<div class="tx" style="left:14px;top:369px"><i style="left:0px">P</i><i style="left:8px">-</i><i style="left:12px">I</i><i style="left:15px">n</i><i style="left:22px">v</i><i style="left:28px">o</i><i style="left:35px">i</i><i style="left:38px">c</i><i style="left:44px">e</i></div>
<div class="tx" style="left:114px;top:369px"><i style="left:0px">4</i><i style="left:7px">2</i><i style="left:14px">3</i><i style="left:21px">6</i><i style="left:28px">8</i><i style="left:35px">0</i></div>
<div class="tx" style="left:264px;top:369px"><i style="left:0px">0</i><i style="left:7px">2</i><i style="left:14px">/</i><i style="left:17px">1</i><i style="left:24px">3</i><i style="left:31px">/</i><i style="left:34px">2</i><i style="left:41px">0</i><i style="left:48px">1</i><i style="left:55px">8</i></div>
<div class="tx" style="left:369px;top:369px"><i style="left:0px">0</i><i style="left:7px">2</i><i style="left:14px">/</i><i style="left:17px">1</i><i style="left:24px">3</i><i style="left:31px">/</i><i style="left:34px">2</i><i style="left:41px">0</i><i style="left:48px">1</i><i style="left:55px">8</i></div>
<div class="tx" style="left:439px;top:369px"><i style="left:0px">0</i><i style="left:7px">2</i><i style="left:14px">/</i><i style="left:17px">1</i><i style="left:24px">3</i><i style="left:31px">/</i><i style="left:34px">2</i><i style="left:41px">0</i><i style="left:48px">1</i><i style="left:55px">8</i></div>
<div class="tx" style="left:543px;top:369px"><i style="left:0px">1</i><i style="left:7px">0</i><i style="left:14px">0</i><i style="left:21px">.</i><i style="left:24px">0</i><i style="left:31px">0</i></div>
<div class="tx" style="left:622px;top:369px"><i style="left:0px">0</i><i style="left:7px">.</i><i style="left:10px">0</i><i style="left:17px">0</i></div>
<div class="tx" style="left:667px;top:369px"><i style="left:0px">6</i><i style="left:7px">.</i><i style="left:10px">6</i><i style="left:17px">7</i></div>
<div class="tx" style="left:704px;top:369px"><i style="left:0px">0</i><i style="left:7px">2</i><i style="left:14px">/</i><i style="left:17px">1</i><i style="left:24px">3</i><i style="left:31px">/</i><i style="left:34px">2</i><i style="left:41px">0</i><i style="left:48px">1</i><i style="left:55px">8</i></div>
<svg style="left:784px;top:369px" width="12" height="12" viewBox="0 0 12 12"><rect width="12" height="1" fill="#6E8092"/><rect width="1" height="12" fill="#6E8092"/><rect x="11" y="2" width="1" height="10" fill="#6E8092"/><rect x="2" y="11" width="10" height="1" fill="#6E8092"/><rect x="2" y="2" width="9" height="9" fill="url(#cbg)"/></svg>
<div class="tx" style="left:14px;top:388px"><i style="left:0px">P</i><i style="left:8px">-</i><i style="left:12px">I</i><i style="left:15px">n</i><i style="left:22px">v</i><i style="left:28px">o</i><i style="left:35px">i</i><i style="left:38px">c</i><i style="left:44px">e</i></div>
<div class="tx" style="left:114px;top:388px"><i style="left:0px">4</i><i style="left:7px">2</i><i style="left:14px">3</i><i style="left:21px">6</i><i style="left:28px">8</i><i style="left:35px">3</i></div>
<div class="tx" style="left:264px;top:388px"><i style="left:0px">0</i><i style="left:7px">2</i><i style="left:14px">/</i><i style="left:17px">1</i><i style="left:24px">4</i><i style="left:31px">/</i><i style="left:34px">2</i><i style="left:41px">0</i><i style="left:48px">1</i><i style="left:55px">8</i></div>
<div class="tx" style="left:369px;top:388px"><i style="left:0px">0</i><i style="left:7px">2</i><i style="left:14px">/</i><i style="left:17px">1</i><i style="left:24px">4</i><i style="left:31px">/</i><i style="left:34px">2</i><i style="left:41px">0</i><i style="left:48px">1</i><i style="left:55px">8</i></div>
<div class="tx" style="left:439px;top:388px"><i style="left:0px">0</i><i style="left:7px">2</i><i style="left:14px">/</i><i style="left:17px">1</i><i style="left:24px">4</i><i style="left:31px">/</i><i style="left:34px">2</i><i style="left:41px">0</i><i style="left:48px">1</i><i style="left:55px">8</i></div>
<div class="tx" style="left:543px;top:388px"><i style="left:0px">1</i><i style="left:7px">0</i><i style="left:14px">0</i><i style="left:21px">.</i><i style="left:24px">0</i><i style="left:31px">0</i></div>
<div class="tx" style="left:622px;top:388px"><i style="left:0px">0</i><i style="left:7px">.</i><i style="left:10px">0</i><i style="left:17px">0</i></div>
<div class="tx" style="left:667px;top:388px"><i style="left:0px">6</i><i style="left:7px">.</i><i style="left:10px">6</i><i style="left:17px">7</i></div>
<div class="tx" style="left:704px;top:388px"><i style="left:0px">0</i><i style="left:7px">2</i><i style="left:14px">/</i><i style="left:17px">1</i><i style="left:24px">4</i><i style="left:31px">/</i><i style="left:34px">2</i><i style="left:41px">0</i><i style="left:48px">1</i><i style="left:55px">8</i></div>
<svg style="left:784px;top:388px" width="12" height="12" viewBox="0 0 12 12"><rect width="12" height="1" fill="#6E8092"/><rect width="1" height="12" fill="#6E8092"/><rect x="11" y="2" width="1" height="10" fill="#6E8092"/><rect x="2" y="11" width="10" height="1" fill="#6E8092"/><rect x="2" y="2" width="9" height="9" fill="url(#cbg)"/></svg>
<div class="tx" style="left:14px;top:407px"><i style="left:0px">P</i><i style="left:8px">-</i><i style="left:12px">I</i><i style="left:15px">n</i><i style="left:22px">v</i><i style="left:28px">o</i><i style="left:35px">i</i><i style="left:38px">c</i><i style="left:44px">e</i></div>
<div class="tx" style="left:114px;top:407px"><i style="left:0px">4</i><i style="left:7px">2</i><i style="left:14px">3</i><i style="left:21px">6</i><i style="left:28px">9</i><i style="left:35px">0</i></div>
<div class="tx" style="left:264px;top:407px"><i style="left:0px">0</i><i style="left:7px">2</i><i style="left:14px">/</i><i style="left:17px">1</i><i style="left:24px">9</i><i style="left:31px">/</i><i style="left:34px">2</i><i style="left:41px">0</i><i style="left:48px">1</i><i style="left:55px">8</i></div>
<div class="tx" style="left:369px;top:407px"><i style="left:0px">0</i><i style="left:7px">2</i><i style="left:14px">/</i><i style="left:17px">1</i><i style="left:24px">9</i><i style="left:31px">/</i><i style="left:34px">2</i><i style="left:41px">0</i><i style="left:48px">1</i><i style="left:55px">8</i></div>
<div class="tx" style="left:439px;top:407px"><i style="left:0px">0</i><i style="left:7px">2</i><i style="left:14px">/</i><i style="left:17px">1</i><i style="left:24px">9</i><i style="left:31px">/</i><i style="left:34px">2</i><i style="left:41px">0</i><i style="left:48px">1</i><i style="left:55px">8</i></div>
<div class="tx" style="left:543px;top:407px"><i style="left:0px">1</i><i style="left:7px">0</i><i style="left:14px">0</i><i style="left:21px">.</i><i style="left:24px">0</i><i style="left:31px">0</i></div>
<div class="tx" style="left:622px;top:407px"><i style="left:0px">0</i><i style="left:7px">.</i><i style="left:10px">0</i><i style="left:17px">0</i></div>
<div class="tx" style="left:667px;top:407px"><i style="left:0px">6</i><i style="left:7px">.</i><i style="left:10px">6</i><i style="left:17px">7</i></div>
<div class="tx" style="left:704px;top:407px"><i style="left:0px">0</i><i style="left:7px">2</i><i style="left:14px">/</i><i style="left:17px">1</i><i style="left:24px">9</i><i style="left:31px">/</i><i style="left:34px">2</i><i style="left:41px">0</i><i style="left:48px">1</i><i style="left:55px">8</i></div>
<svg style="left:784px;top:407px" width="12" height="12" viewBox="0 0 12 12"><rect width="12" height="1" fill="#6E8092"/><rect width="1" height="12" fill="#6E8092"/><rect x="11" y="2" width="1" height="10" fill="#6E8092"/><rect x="2" y="11" width="10" height="1" fill="#6E8092"/><rect x="2" y="2" width="9" height="9" fill="url(#cbg)"/></svg>
<div class="tx" style="left:14px;top:426px"><i style="left:0px">P</i><i style="left:8px">-</i><i style="left:12px">I</i><i style="left:15px">n</i><i style="left:22px">v</i><i style="left:28px">o</i><i style="left:35px">i</i><i style="left:38px">c</i><i style="left:44px">e</i></div>
<div class="tx" style="left:114px;top:426px"><i style="left:0px">4</i><i style="left:7px">2</i><i style="left:14px">3</i><i style="left:21px">6</i><i style="left:28px">9</i><i style="left:35px">3</i></div>
<div class="tx" style="left:264px;top:426px"><i style="left:0px">0</i><i style="left:7px">2</i><i style="left:14px">/</i><i style="left:17px">2</i><i style="left:24px">0</i><i style="left:31px">/</i><i style="left:34px">2</i><i style="left:41px">0</i><i style="left:48px">1</i><i style="left:55px">8</i></div>
<div class="tx" style="left:369px;top:426px"><i style="left:0px">0</i><i style="left:7px">2</i><i style="left:14px">/</i><i style="left:17px">2</i><i style="left:24px">0</i><i style="left:31px">/</i><i style="left:34px">2</i><i style="left:41px">0</i><i style="left:48px">1</i><i style="left:55px">8</i></div>
<div class="tx" style="left:439px;top:426px"><i style="left:0px">0</i><i style="left:7px">2</i><i style="left:14px">/</i><i style="left:17px">2</i><i style="left:24px">0</i><i style="left:31px">/</i><i style="left:34px">2</i><i style="left:41px">0</i><i style="left:48px">1</i><i style="left:55px">8</i></div>
<div class="tx" style="left:543px;top:426px"><i style="left:0px">1</i><i style="left:7px">0</i><i style="left:14px">0</i><i style="left:21px">.</i><i style="left:24px">0</i><i style="left:31px">0</i></div>
<div class="tx" style="left:622px;top:426px"><i style="left:0px">0</i><i style="left:7px">.</i><i style="left:10px">0</i><i style="left:17px">0</i></div>
<div class="tx" style="left:667px;top:426px"><i style="left:0px">6</i><i style="left:7px">.</i><i style="left:10px">6</i><i style="left:17px">7</i></div>
<div class="tx" style="left:704px;top:426px"><i style="left:0px">0</i><i style="left:7px">2</i><i style="left:14px">/</i><i style="left:17px">2</i><i style="left:24px">0</i><i style="left:31px">/</i><i style="left:34px">2</i><i style="left:41px">0</i><i style="left:48px">1</i><i style="left:55px">8</i></div>
<svg style="left:784px;top:426px" width="12" height="12" viewBox="0 0 12 12"><rect width="12" height="1" fill="#6E8092"/><rect width="1" height="12" fill="#6E8092"/><rect x="11" y="2" width="1" height="10" fill="#6E8092"/><rect x="2" y="11" width="10" height="1" fill="#6E8092"/><rect x="2" y="2" width="9" height="9" fill="url(#cbg)"/></svg>
<div class="tx" style="left:14px;top:445px"><i style="left:0px">P</i><i style="left:8px">-</i><i style="left:12px">I</i><i style="left:15px">n</i><i style="left:22px">v</i><i style="left:28px">o</i><i style="left:35px">i</i><i style="left:38px">c</i><i style="left:44px">e</i></div>
<div class="tx" style="left:114px;top:445px"><i style="left:0px">4</i><i style="left:7px">2</i><i style="left:14px">3</i><i style="left:21px">6</i><i style="left:28px">9</i><i style="left:35px">6</i></div>
<div class="tx" style="left:264px;top:445px"><i style="left:0px">0</i><i style="left:7px">2</i><i style="left:14px">/</i><i style="left:17px">2</i><i style="left:24px">1</i><i style="left:31px">/</i><i style="left:34px">2</i><i style="left:41px">0</i><i style="left:48px">1</i><i style="left:55px">8</i></div>
<div class="tx" style="left:369px;top:445px"><i style="left:0px">0</i><i style="left:7px">2</i><i style="left:14px">/</i><i style="left:17px">2</i><i style="left:24px">1</i><i style="left:31px">/</i><i style="left:34px">2</i><i style="left:41px">0</i><i style="left:48px">1</i><i style="left:55px">8</i></div>
<div class="tx" style="left:439px;top:445px"><i style="left:0px">0</i><i style="left:7px">2</i><i style="left:14px">/</i><i style="left:17px">2</i><i style="left:24px">1</i><i style="left:31px">/</i><i style="left:34px">2</i><i style="left:41px">0</i><i style="left:48px">1</i><i style="left:55px">8</i></div>
<div class="tx" style="left:543px;top:445px"><i style="left:0px">1</i><i style="left:7px">0</i><i style="left:14px">0</i><i style="left:21px">.</i><i style="left:24px">0</i><i style="left:31px">0</i></div>
<div class="tx" style="left:622px;top:445px"><i style="left:0px">0</i><i style="left:7px">.</i><i style="left:10px">0</i><i style="left:17px">0</i></div>
<div class="tx" style="left:667px;top:445px"><i style="left:0px">6</i><i style="left:7px">.</i><i style="left:10px">6</i><i style="left:17px">7</i></div>
<div class="tx" style="left:704px;top:445px"><i style="left:0px">0</i><i style="left:7px">2</i><i style="left:14px">/</i><i style="left:17px">2</i><i style="left:24px">1</i><i style="left:31px">/</i><i style="left:34px">2</i><i style="left:41px">0</i><i style="left:48px">1</i><i style="left:55px">8</i></div>
<svg style="left:784px;top:445px" width="12" height="12" viewBox="0 0 12 12"><rect width="12" height="1" fill="#6E8092"/><rect width="1" height="12" fill="#6E8092"/><rect x="11" y="2" width="1" height="10" fill="#6E8092"/><rect x="2" y="11" width="10" height="1" fill="#6E8092"/><rect x="2" y="2" width="9" height="9" fill="url(#cbg)"/></svg>
<div class="red" style="left:222px;top:174px;width:282px;height:2px"></div>
<div class="red" style="left:222px;top:343px;width:282px;height:2px"></div>
<div class="red" style="left:222px;top:174px;width:2px;height:171px"></div>
<div class="red" style="left:502px;top:174px;width:2px;height:171px"></div>
<div class="red" style="left:221px;top:346px;width:282px;height:2px"></div>
<div class="red" style="left:221px;top:459px;width:282px;height:2px"></div>
<div class="red" style="left:221px;top:346px;width:2px;height:115px"></div>
<div class="red" style="left:501px;top:346px;width:2px;height:115px"></div>
<div style="left:11px;top:484px;width:825px;height:40px;border-top:1px solid #C3C3C3;border-left:1px solid #C3C3C3;border-right:1px solid #C5CBD0;border-bottom:1px solid #C5CBD0;box-shadow:inset -1px -1px 0 #7E7E7E,inset -2px -2px 0 #ABABAB"></div>
<div class="tx" style="left:606px;top:495px;font-size:14px;line-height:16px;font-weight:bold;color:#2B2B33"><i style="left:0px">O</i><i style="left:12px">r</i><i style="left:18px">d</i><i style="left:28px">e</i><i style="left:37px">r</i></div>
<div class="tx" style="left:652px;top:495px;font-size:14px;line-height:16px;font-weight:bold;color:#2B2B33"><i style="left:0px">T</i><i style="left:9px">o</i><i style="left:18px">t</i><i style="left:23px">a</i><i style="left:31px">l</i></div>
<div style="left:697px;top:490px;width:100px;height:24px;border:1px solid #8A8A8A;background:#EEEEEE"></div>
<div class="tx" style="left:742px;top:494px;font-size:14px;line-height:16px;font-weight:bold;color:#2B2B33"><i style="left:0px">1</i><i style="left:8px">5</i><i style="left:16px">0</i><i style="left:24px">0</i><i style="left:32px">.</i><i style="left:36px">0</i><i style="left:44px">0</i></div>
</body></html>
